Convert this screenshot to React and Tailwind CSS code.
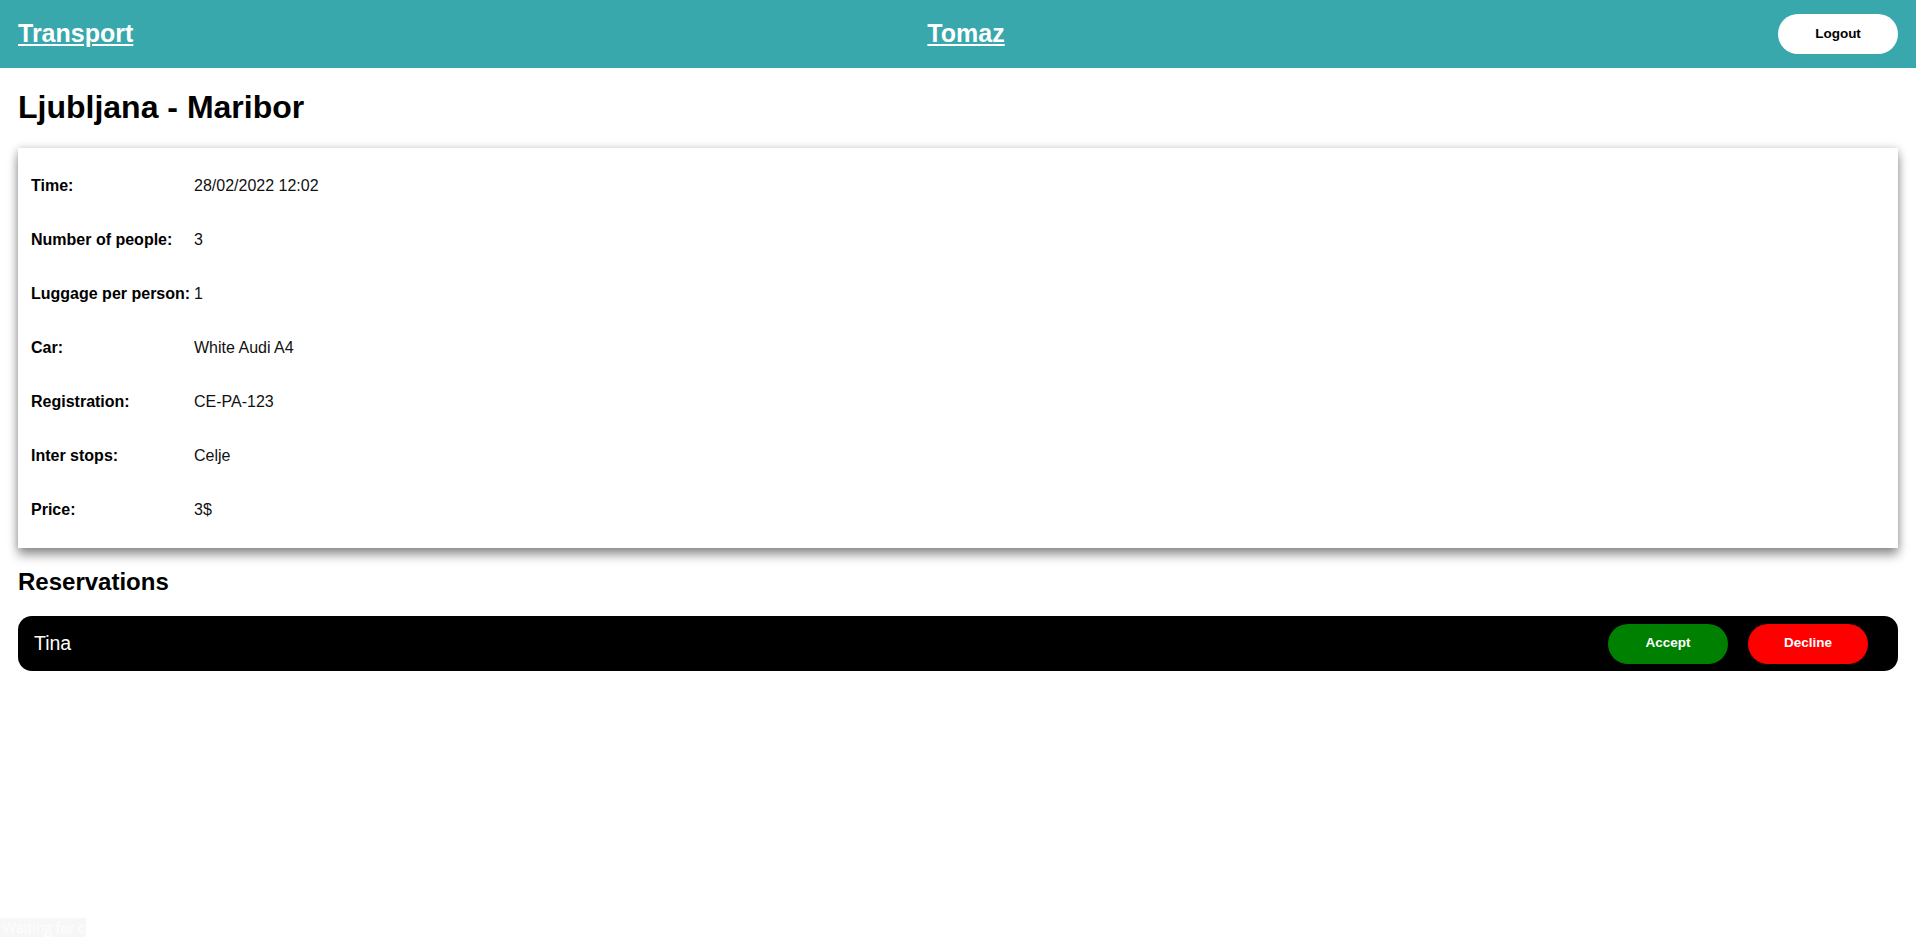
import React from "react";

const details = [
  ["Time:", "28/02/2022 12:02"],
  ["Number of people:", "3"],
  ["Luggage per person:", "1"],
  ["Car:", "White Audi A4"],
  ["Registration:", "CE-PA-123"],
  ["Inter stops:", "Celje"],
  ["Price:", "3$"],
];

export default function App() {
  return (
    <div className="min-h-[937px] bg-white text-black font-['Liberation_Sans',Arial,sans-serif]">
      <header className="h-[68px] bg-[#38a8ac] px-[18px] flex items-center">
        <div className="flex-1">
          <a href="#" className="text-[25px] font-bold text-white underline">Transport</a>
        </div>
        <a href="#" className="pl-[16px] text-[25px] font-bold text-white underline">Tomaz</a>
        <div className="flex-1 flex justify-end">
          <button className="w-[120px] h-[40px] rounded-full bg-white text-black text-[13.5px] font-bold">
            Logout
          </button>
        </div>
      </header>

      <main className="px-[18px]">
        <h1 className="mt-[21px] mb-[22px] text-[32px] leading-[37px] font-bold">Ljubljana - Maribor</h1>

        <div className="bg-white py-[11px] pl-[13px] shadow-[0_7px_10px_rgba(0,0,0,0.4),0_0_8px_rgba(0,0,0,0.18)]">
          {details.map(([label, value]) => (
            <div key={label} className="h-[54px] flex items-center text-[16px]">
              <span className="w-[163px] font-bold">{label}</span>
              <span className="text-[#111]">{value}</span>
            </div>
          ))}
        </div>

        <h2 className="my-[20px] text-[24px] leading-[28px] font-bold">Reservations</h2>

        <div className="h-[55px] bg-black rounded-[14px] pl-[16px] pr-[30px] flex items-center">
          <span className="flex-1 text-white text-[19.5px]">Tina</span>
          <div className="flex gap-[20px]">
            <button className="w-[120px] h-[40px] rounded-full bg-[#008000] text-white text-[13.5px] font-bold">
              Accept
            </button>
            <button className="w-[120px] h-[40px] rounded-full bg-[#ff0000] text-white text-[13.5px] font-bold">
              Decline
            </button>
          </div>
        </div>
      </main>

      <div className="fixed left-0 bottom-0 w-[86px] h-[19px] overflow-hidden whitespace-nowrap pl-[3px] bg-[#f7f7f7] text-[#fefefe] text-[14px] leading-[19px] font-['Open_Sans',sans-serif]">
        Waiting for cache...
      </div>
    </div>
  );
}
